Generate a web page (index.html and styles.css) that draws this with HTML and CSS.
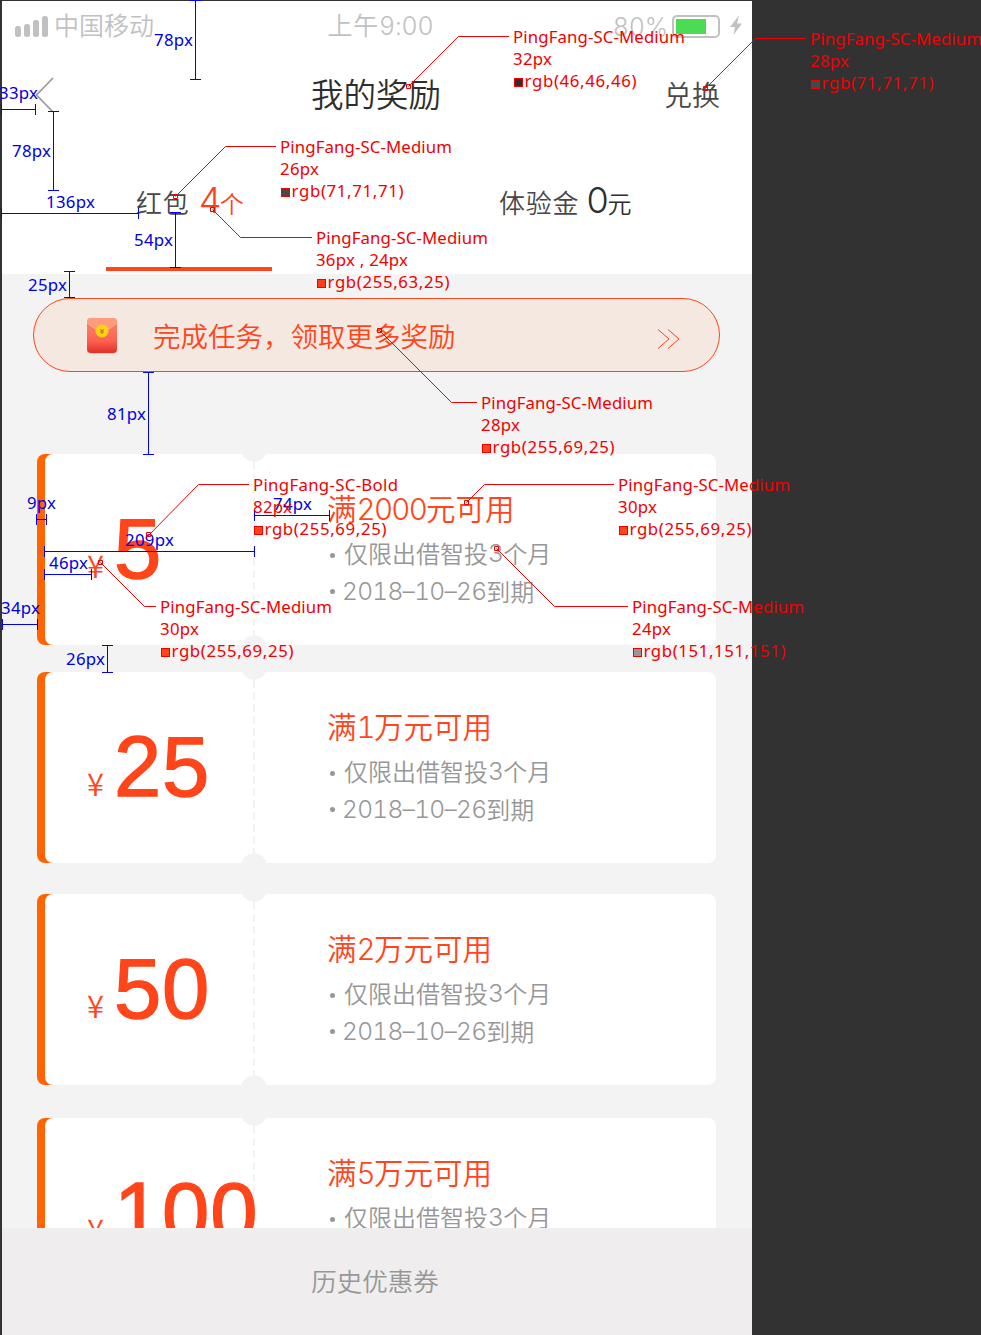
FILE: index.html
```html
<!DOCTYPE html>
<html lang="zh-CN">
<head>
<meta charset="utf-8">
<title>我的奖励</title>
<link rel="stylesheet" href="styles.css">
</head>
<body>
<main class="phone">
  <header class="top">
    <div class="status">
      <div class="carrier">
        <svg class="signal" width="34" height="22" viewBox="0 0 34 22"><rect x="0" y="10" width="6" height="11" rx="2.5"/><rect x="9" y="8" width="6" height="13" rx="2.5"/><rect x="18" y="4" width="6" height="17" rx="2.5"/><rect x="27" y="0" width="6" height="21" rx="2.5"/></svg>
        <span>中国移动</span>
      </div>
      <div class="clock">上午<em>9:00</em></div>
      <div class="power">
        <em>80%</em>
        <svg width="72" height="24" viewBox="0 0 72 24"><rect x="1" y="1" width="46" height="21" rx="4" fill="none" stroke="#c1c1c1" stroke-width="2"/><rect x="4" y="4" width="30" height="15" fill="#4cdb54"/><path d="M67 0.500L58 12H63L61.500 20L70 8.500H65Z" fill="#c1c1c1"/></svg>
      </div>
    </div>
    <nav class="nav">
      <svg class="back" width="20" height="36" viewBox="0 0 20 36"><path d="M18 1L1.500 18L18 35" fill="none" stroke="#999" stroke-width="1.700"/></svg>
      <h1>我的奖励</h1>
      <span class="exchange">兑换</span>
    </nav>
    <div class="tabs">
      <div class="tab active"><span>红包</span><b>4</b><i>个</i></div>
      <div class="tab"><span>体验金</span><b>0</b><i>元</i></div>
    </div>
  </header>

  <section class="banner">
    <svg class="envelope" width="34" height="40" viewBox="0 0 34 40">
      <defs><linearGradient id="red" x1="0" y1="0" x2="0" y2="1"><stop offset="0" stop-color="#ff8b70"/><stop offset=".65" stop-color="#fb6250"/><stop offset="1" stop-color="#df3028"/></linearGradient></defs>
      <rect x="2" y="3" width="30" height="35" rx="4" fill="#efc5bb"/>
      <rect x="2" y="2" width="30" height="35" rx="4" fill="url(#red)"/>
      <path d="M2 9V6Q2 2 6 2H28Q32 2 32 6V9Q17 23 2 9Z" fill="#ff9b7d"/>
      <path d="M2 9Q17 23 32 9" fill="none" stroke="#ed6553" stroke-width="1"/>
      <circle cx="17" cy="15" r="6.500" fill="#ffd414"/>
      <text class="coin" x="17" y="18" text-anchor="middle">¥</text>
    </svg>
    <span>完成任务，领取更多奖励</span>
    <svg class="more" width="24" height="22" viewBox="0 0 24 22"><path d="M1 1.500L12 11L1 20.500M11 1.500L22 11L11 20.500" fill="none" stroke="#ff4519"/></svg>
  </section>

  <section class="coupons">
    <article class="coupon"><div class="amount"><small>¥</small><strong>5</strong></div><div class="detail"><h2>满<em>2000</em>元可用</h2><p class="terms">仅限出借智投<em>3</em>个月</p><p class="date"><em>2018–10–26</em>到期</p></div></article>
    <article class="coupon second"><div class="amount"><small>¥</small><strong>25</strong></div><div class="detail"><h2>满<em>1</em>万元可用</h2><p class="terms">仅限出借智投<em>3</em>个月</p><p class="date"><em>2018–10–26</em>到期</p></div></article>
    <article class="coupon third"><div class="amount"><small>¥</small><strong>50</strong></div><div class="detail"><h2>满<em>2</em>万元可用</h2><p class="terms">仅限出借智投<em>3</em>个月</p><p class="date"><em>2018–10–26</em>到期</p></div></article>
    <article class="coupon fourth"><div class="amount"><small>¥</small><strong>100</strong></div><div class="detail"><h2>满<em>5</em>万元可用</h2><p class="terms">仅限出借智投<em>3</em>个月</p><p class="date"><em>2018–10–26</em>到期</p></div></article>
  </section>
  <footer class="history">历史优惠券</footer>
</main>

<svg class="notes" width="981" height="1335" viewBox="0 0 981 1335">
  <g class="measure">
    <path d="M195.500 0V79M190 .5H201M190 79.500H201M53.500 111V190M48 111.500H59M48 190.500H59M175.500 212V267M170 212.500H181M170 267.500H181M69.500 271V297M64 271.500H75M64 297.500H75M148.500 372V454M143 372.500H154M143 454.500H154M107.500 645V672M102 645.500H113M102 672.500H113"/>
    <path d="M2 109.500H35M1.500 104V115M35.500 104V115M2 213.500H138M1.500 208V219M138.500 208V219M37 519.500H46M36.500 514V525M46.500 514V525M45 551.500H254M44.500 546V557M254.500 546V557M45 574.500H91M44.500 569V580M91.500 569V580M3 624.500H37M2.500 619V630M37.500 619V630M254 515.500H329M254.500 510V521M329.500 510V521"/>
    <text x="154" y="46" textLength="39">78px</text>
    <text x="-1" y="99" textLength="39">33px</text>
    <text x="12" y="157" textLength="39">78px</text>
    <text x="46" y="208" textLength="49">136px</text>
    <text x="134" y="246" textLength="39">54px</text>
    <text x="28" y="291" textLength="39">25px</text>
    <text x="107" y="420" textLength="39">81px</text>
    <text x="27" y="509" textLength="29">9px</text>
    <text x="273" y="510" textLength="39">74px</text>
    <text x="125" y="546" textLength="49">209px</text>
    <text x="49" y="569" textLength="39">46px</text>
    <text x="1" y="614" textLength="39">34px</text>
    <text x="66" y="665" textLength="39">26px</text>
  </g>
  <g class="callout">
    <path d="M408.500 86.500L458.500 36.500H509M705.500 88.500L755.500 38.500H806M175.500 196.500L225.500 146.500H276M212.500 209.500L240.500 237.500H312M379.500 330.500L451.500 402.500H477M148.500 535.500L198.500 484.500H249M466.500 502.500L484.500 484.500H614M100.500 562.500L144.500 606.500H156M496.500 548.500L554.500 606.500H628"/>
    <path d="M406.500 84.500h4v4h-4zM703.500 86.500h4v4h-4zM173.500 194.500h4v4h-4zM210.500 207.500h4v4h-4zM377.500 328.500h4v4h-4zM146.500 532.500h4v4h-4zM464.500 500.500h4v4h-4zM98.500 560.500h4v4h-4zM494.500 546.500h4v4h-4z"/>
    <g transform="translate(513 43)"><text textLength="172">PingFang-SC-Medium</text><text y="22" textLength="39">32px</text><rect x="1.500" y="35.500" width="8" height="8" fill="#2e2e2e"/><text x="11.500" y="44" textLength="112">rgb(46,46,46)</text></g>
    <g transform="translate(810 45)"><text textLength="172">PingFang-SC-Medium</text><text y="22" textLength="39">28px</text><rect x="1.500" y="35.500" width="8" height="8" fill="#474747"/><text x="11.500" y="44" textLength="112">rgb(71,71,71)</text></g>
    <g transform="translate(280 153)"><text textLength="172">PingFang-SC-Medium</text><text y="22" textLength="39">26px</text><rect x="1.500" y="35.500" width="8" height="8" fill="#474747"/><text x="11.500" y="44" textLength="112">rgb(71,71,71)</text></g>
    <g transform="translate(316 244)"><text textLength="172">PingFang-SC-Medium</text><text y="22" textLength="92">36px , 24px</text><rect x="1.500" y="35.500" width="8" height="8" fill="#ff3f19"/><text x="11.500" y="44" textLength="122">rgb(255,63,25)</text></g>
    <g transform="translate(481 409)"><text textLength="172">PingFang-SC-Medium</text><text y="22" textLength="39">28px</text><rect x="1.500" y="35.500" width="8" height="8" fill="#ff4519"/><text x="11.500" y="44" textLength="122">rgb(255,69,25)</text></g>
    <g transform="translate(253 491)"><text textLength="145">PingFang-SC-Bold</text><text y="22" textLength="39">82px</text><rect x="1.500" y="35.500" width="8" height="8" fill="#ff4519"/><text x="11.500" y="44" textLength="122">rgb(255,69,25)</text></g>
    <g transform="translate(618 491)"><text textLength="172">PingFang-SC-Medium</text><text y="22" textLength="39">30px</text><rect x="1.500" y="35.500" width="8" height="8" fill="#ff4519"/><text x="11.500" y="44" textLength="122">rgb(255,69,25)</text></g>
    <g transform="translate(160 613)"><text textLength="172">PingFang-SC-Medium</text><text y="22" textLength="39">30px</text><rect x="1.500" y="35.500" width="8" height="8" fill="#ff4519"/><text x="11.500" y="44" textLength="122">rgb(255,69,25)</text></g>
    <g transform="translate(632 613)"><text textLength="172">PingFang-SC-Medium</text><text y="22" textLength="39">24px</text><rect x="1.500" y="35.500" width="8" height="8" fill="#979797"/><text x="11.500" y="44" textLength="142">rgb(151,151,151)</text></g>
  </g>
</svg>
</body>
</html>
```

FILE: styles.css
```css
* { box-sizing: border-box; }
body {
  margin: 0;
  padding: 1px 0 0 2px;
  height: 1335px;
  overflow: hidden;
  background: #323232;
  font-family: "Noto Sans CJK SC", sans-serif;
  font-weight: 350;
}
h1, h2, p { margin: 0; font-weight: 350; }
i { font-style: normal; }
em, b { font-style: normal; font-weight: 300; font-family: Inter, sans-serif; font-variant-numeric: tabular-nums; }
.phone {
  width: 750px;
  height: 1334px;
  display: flex;
  flex-direction: column;
  background: #f3f3f3;
}
.top { height: 273px; flex: none; background: #fff; display: flex; flex-direction: column; }

.status {
  height: 50px;
  display: grid;
  grid-template-columns: 1fr auto 1fr;
  align-items: center;
  color: #c1c1c1;
  font-size: 25px;
  line-height: 46px;
}
.carrier { display: flex; align-items: center; gap: 5px; padding-left: 13px; height: 50px; }
.carrier span { padding-bottom: 5px; }
.signal { fill: #c1c1c1; }
.clock { padding: 0 0 3px 7px; letter-spacing: .8px; }
.clock em { letter-spacing: -.2px; }
.power { display: flex; justify-content: flex-end; align-items: center; gap: 4px; padding-right: 8px; letter-spacing: -.2px; }

.nav {
  height: 88px;
  display: grid;
  grid-template-columns: 1fr auto 1fr;
  align-items: center;
  padding: 0 32px 0 33px;
}
.nav h1 { margin-right: 3px; padding-bottom: 5px; font-size: 32.500px; line-height: 83px; color: #2e2e2e; }
.exchange { justify-self: end; padding-bottom: 3px; font-size: 28px; color: #474747; }

.tabs { flex: 1; display: grid; grid-template-columns: 1fr 1fr; padding: 0 0 3px; }
.tab { display: flex; align-items: baseline; color: #474747; line-height: 123px; padding-left: 122px; }
.tab span { font-size: 26px; letter-spacing: .7px; margin-right: 7px; }
.tab b { font-size: 36px; letter-spacing: -2px; line-height: 123px; color: #2e2e2e; }
.tab i { font-size: 24px; color: #2e2e2e; }
.tab.active { margin: 0 105px 0 104px; padding-left: 30px; border-bottom: 4px solid #ff4519; white-space: nowrap; }
.tab.active span { margin-right: 9px; }
.tab.active b, .tab.active i { color: #ff3f19; }

.banner {
  flex: none;
  width: 687px;
  height: 74px;
  margin: 24px 0 82px 31px;
  padding: 0 38px 0 51px;
  display: flex;
  align-items: center;
  border: 1px solid #ff4519;
  border-radius: 37px;
  background: #f5e8e0;
  color: #ff4519;
  font-size: 27.500px;
}
.banner .envelope { margin-top: 2px; }
.banner span { margin-left: 34px; padding-bottom: 1px; }
.banner .more { margin-left: auto; margin-top: 8px; }
.coin { font: bold 8px "Liberation Sans", sans-serif; fill: #ce7515; }

.coupons { flex: none; height: 774px; overflow: hidden; padding-left: 35px; }
.coupon {
  position: relative;
  width: 679px;
  height: 191px;
  display: grid;
  grid-template-columns: 217px 1fr;
  border-radius: 8px;
  background: linear-gradient(90deg, #ff6400 20px, transparent 20px);
}
.coupon::before {
  content: "";
  position: absolute;
  inset: 0 0 0 8px;
  border-radius: 8px;
  background: radial-gradient(circle at 209px -5px, #f3f3f3 12.500px, transparent 13px),
    radial-gradient(circle at 209px 194px, #f3f3f3 12.500px, transparent 13px),
    repeating-linear-gradient(#f3f3f3 0 4px, transparent 4px 8px, #f3f3f3 8px 12px) 208px 0 / 2px 100% no-repeat,
    #fff;
}
.coupon > div { position: relative; }
.second { margin-top: 27px; }
.third { margin-top: 31px; }
.fourth { margin-top: 33px; }
.amount { display: flex; align-items: baseline; padding-left: 50px; color: #ff4519; white-space: nowrap; line-height: 190px; }
.amount small { flex: none; width: 27px; font: 350 31px/190px "Noto Sans CJK SC", sans-serif; }
.amount strong { font: 400 85px/190px "Liberation Sans", sans-serif; letter-spacing: .8px; -webkit-text-stroke: 1.400px #ff4519; }
.detail { padding: 30px 0 0 73px; color: #979797; }
.detail h2 { font-size: 29.500px; line-height: 46px; color: #ff4519; }
.detail h2 em { font-size: 29.500px; letter-spacing: -1.700px; }
.detail p { display: flex; align-items: center; font-size: 24px; line-height: 38px; }
.detail p::before { content: ""; width: 5px; height: 5px; margin: 4px 9px 0 3px; border-radius: 50%; background: #979797; }
.detail p em { font-size: 24.500px; letter-spacing: -.7px; }
.terms { margin-top: 2px; }
.detail .date::before { margin: 1px 7px 0 3px; }

.history {
  flex: none;
  height: 107px;
  padding-right: 4px;
  background: #efedee;
  color: #979797;
  font-size: 25.500px;
  line-height: 103px;
  text-align: center;
}

/* Specification overlay: blue distances and red type callouts */
.notes { position: absolute; left: 0; top: 0; pointer-events: none; font: 400 16.800px "Noto Sans", sans-serif; }
.notes path { fill: none; stroke-width: 1; }
.measure { fill: #0000e0; }
.measure path { stroke: #0000ff; }
.callout { fill: #f00000; }
.callout path, .callout rect { stroke: #f00000; }
```
